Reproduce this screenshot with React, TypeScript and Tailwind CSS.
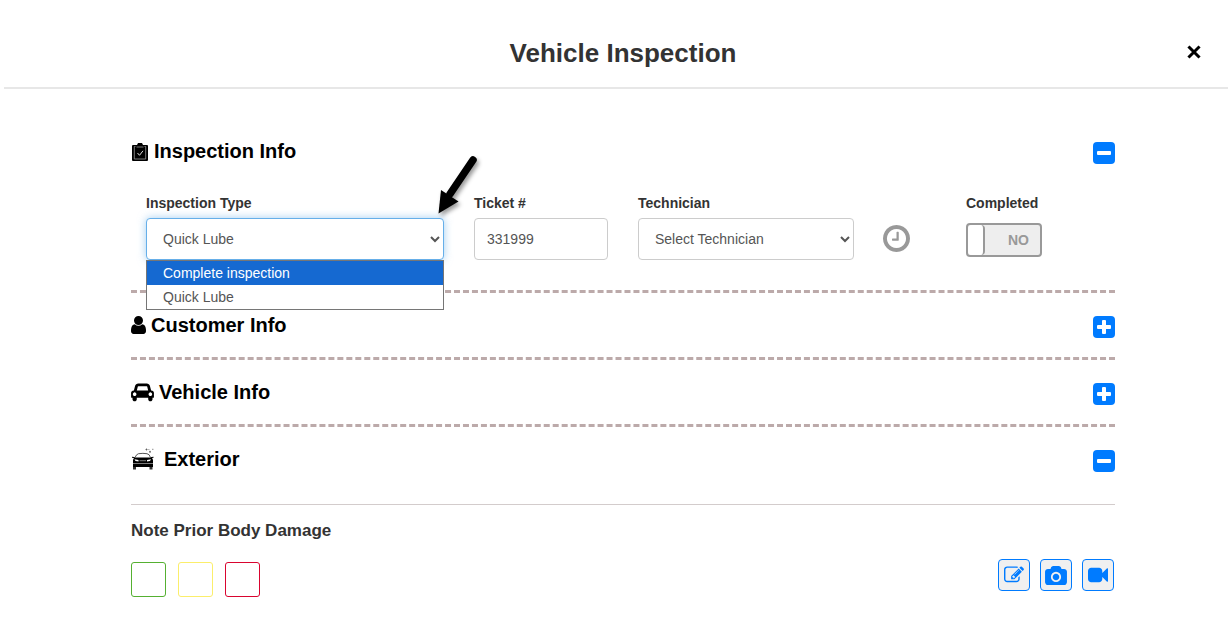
import React, { useState } from "react";

interface SectionHeaderProps {
    title: string;
    icon: React.ReactNode;
    open: boolean;
    onToggle: () => void;
}

const damageLevels = [
    { name: "Minor damage", style: "border-[#55b031]" },
    { name: "Moderate damage", style: "border-[#fbee6b]" },
    { name: "Severe damage", style: "border-[#d9042f]" },
];

const inspectionTypes = ["Complete inspection", "Quick Lube"];

const labelClass = "block h-5 text-sm leading-5 font-bold text-[#333]";
const controlClass = "mt-[5px] block h-[42px] w-full rounded border bg-white px-3 text-sm text-[#555] outline-none";
const actionClass = "flex size-8 items-center justify-center rounded border border-[#007bff] bg-[#f0f0f0] text-[#007bff]";
const dividerClass = "border-b-[3px] border-dashed border-[#bcaaaa]";

function ClipboardIcon() {
    return (
        <svg viewBox="0 -2 18 22" className="h-[22px] w-[18px]" aria-hidden="true">
            <path d="M2 3h4l1-2h4l1 2h4q1 0 1 1v14q0 1-1 1H2q-1 0-1-1V4q0-1 1-1z" fill="#000" />
            <path d="M4.500 4.500H3.300V17H14.700V4.500H13.500M5.500 5h7" fill="none" stroke="#999" strokeWidth=".8" />
            <path d="M6.500 11l2 2.300 3.500-4.500" fill="none" stroke="#ddd" strokeWidth="1" />
        </svg>
    );
}

function UserIcon() {
    return (
        <svg viewBox="256 128 1280 1536" className="h-[18px] w-[15px]" fill="currentColor" aria-hidden="true">
            <path d="M1536 1399q0 109-62.500 187t-150.500 78h-854q-88 0-150.500-78t-62.500-187q0-85 8.500-160.500t31.500-152 58.500-131 94-89 134.500-34.500q131 128 313 128t313-128q76 0 134.500 34.500t94 89 58.500 131 31.500 152 8.500 160.500zm-256-887q0 159-112.500 271.500t-271.500 112.500-271.500-112.500-112.500-271.500 112.500-271.500 271.500-112.500 271.500 112.500 112.500 271.500z" />
        </svg>
    );
}

function CarIcon() {
    return (
        <svg viewBox="0 0 2048 1792" className="h-5 w-[23px]" fill="currentColor" aria-hidden="true">
            <path d="M480 1088q0-66-47-113t-113-47-113 47-47 113 47 113 113 47 113-47 47-113zm36-320h1016l-89-357q-2-8-14-17.500t-21-9.500h-768q-9 0-21 9.500t-14 17.500zm1372 320q0-66-47-113t-113-47-113 47-47 113 47 113 113 47 113-47 47-113zm160-96v384q0 14-9 23t-23 9h-96v128q0 80-56 136t-136 56-136-56-56-136v-128h-1024v128q0 80-56 136t-136 56-136-56-56-136v-128h-96q-14 0-23-9t-9-23v-384q0-93 65.500-158.500t158.500-65.500h28l105-419q23-94 104-157.500t179-63.500h768q98 0 179 63.500t104 157.500l105 419h28q93 0 158.500 65.500t65.500 158.500z" />
        </svg>
    );
}

function ShinyCarIcon() {
    return (
        <svg viewBox="0 -3 28 28" className="size-7" aria-hidden="true">
            <path d="M4 9.500Q5.500 6 7.500 5.700Q12 5 16 5.700Q18.500 6 19.500 9.500" fill="none" stroke="#444" strokeWidth=".9" />
            <path d="M1 8.800l2 .2 1 .5h15.500l1-.5 2-.2v1l-1.500.2q1 1 1 2.500v6.500H2v-6.500q0-1.500 1-2.500L1 9.800z" fill="#000" />
            <path d="M3.500 11.200l4 .8v1.400l-3-.3zM20 11.200l-4 .8v1.400l3-.3z" fill="#fff" />
            <path d="M8.500 12.700h6.500M2 15.500h20" stroke="#999" strokeWidth=".8" />
            <path d="M2 19h3v2.500H2zM18.500 19h3v2.500h-3z" fill="#333" />
            <path d="M14.500 1.500h2M15.500.5v2M18 3.800h2M19 2.800v2M21.200 1.300h1.200M17.500 1.500h.8" stroke="#555" strokeWidth=".8" />
        </svg>
    );
}

function SectionHeader({ title, icon, open, onToggle }: SectionHeaderProps) {
    return (
        <div className="flex h-16 items-center justify-between">
            <h2 className="flex items-center gap-[5px] text-xl leading-6 font-bold text-black">
                {icon}
                <span>{title}</span>
            </h2>
            <button
                type="button"
                aria-label={`Toggle ${title}`}
                aria-expanded={open}
                onClick={onToggle}
                className="mt-1"
            >
                <svg viewBox="0 0 22 22" className="size-[22px]" aria-hidden="true">
                    <rect width="22" height="22" rx="4" fill="#007bff" />
                    <rect x="4" y="9" width="14" height="4" rx="1" fill="#fff" />
                    {!open && <rect x="9" y="4" width="4" height="14" rx="1" fill="#fff" />}
                </svg>
            </button>
        </div>
    );
}

export default function App() {
    const [openSections, setOpenSections] = useState({ inspection: true, customer: false, vehicle: false, exterior: true });
    const [inspectionType, setInspectionType] = useState("Quick Lube");
    const [menuOpen, setMenuOpen] = useState(true);
    const [ticket, setTicket] = useState("331999");
    const [completed, setCompleted] = useState(false);

    const toggle = (key: keyof typeof openSections) => {
        setOpenSections(prev => ({ ...prev, [key]: !prev[key] }));
    };

    const pickType = (type: string) => {
        setInspectionType(type);
        setMenuOpen(false);
    };

    return (
        <div className="min-h-screen bg-white font-['Liberation_Sans',Arial,sans-serif]">
            <header className="ml-1 flex items-center border-b-2 border-[#e7e7e7] pt-9 pr-[26px] pb-[17px] pl-14">
                <h1 className="flex-1 text-center text-[26px] leading-[34px] font-bold text-[#333]">Vehicle Inspection</h1>
                <button type="button" aria-label="Close" className="pb-0.5 text-black">
                    <svg viewBox="0 0 16 16" className="size-4" aria-hidden="true">
                        <path d="M3.500 3.500l9 9M12.500 3.500l-9 9" stroke="currentColor" strokeWidth="3" strokeLinecap="square" />
                    </svg>
                </button>
            </header>

            <main className="pt-[30px] pr-[113px] pb-10 pl-[131px]">
                <section className={dividerClass}>
                    <SectionHeader title="Inspection Info" icon={<ClipboardIcon />} open={openSections.inspection} onToggle={() => toggle("inspection")} />
                    {openSections.inspection && (
                        <div className="grid grid-cols-12 pt-[10px] pb-[30px]">
                            <div className="relative col-span-4 px-[15px]">
                                <label htmlFor="inspection-type" className={labelClass}>Inspection Type</label>
                                <select
                                    id="inspection-type"
                                    value={inspectionType}
                                    onChange={(e) => pickType(e.target.value)}
                                    className={`${controlClass} border-[#66afe9] shadow-[0_0_8px_rgba(102,175,233,0.6)]`}
                                >
                                    {inspectionTypes.map((type) => (
                                        <option key={type}>{type}</option>
                                    ))}
                                </select>
                                {menuOpen && (
                                    <ul role="listbox" aria-label="Inspection Type" className="absolute inset-x-[15px] top-full z-10 border border-[#767676] bg-white text-sm leading-6 text-[#555]">
                                        {inspectionTypes.map((type) => (
                                            <li
                                                key={type}
                                                role="option"
                                                aria-selected={type === inspectionType}
                                                onClick={() => pickType(type)}
                                                className="px-4 first:bg-[#1569d1] first:text-white"
                                            >
                                                {type}
                                            </li>
                                        ))}
                                    </ul>
                                )}
                                <svg viewBox="0 0 48 66" className="pointer-events-none absolute -right-5 bottom-11 h-[66px] w-12 drop-shadow-[2px_3px_2px_rgba(0,0,0,0.4)]" aria-hidden="true">
                                    <path d="M42 10L19 44" stroke="#000" strokeWidth="7.500" strokeLinecap="round" />
                                    <path d="M7.500 63.500L10 40L27.500 51.500z" fill="#000" />
                                </svg>
                            </div>
                            <div className="col-span-2 px-[15px]">
                                <label htmlFor="ticket" className={labelClass}>Ticket #</label>
                                <input
                                    id="ticket"
                                    type="text"
                                    value={ticket}
                                    onChange={(e) => setTicket(e.target.value)}
                                    className={`${controlClass} border-[#ccc]`}
                                />
                            </div>
                            <div className="col-span-3 px-[15px]">
                                <label htmlFor="technician" className={labelClass}>Technician</label>
                                <select id="technician" className={`${controlClass} border-[#ccc]`}>
                                    <option>Select Technician</option>
                                </select>
                            </div>
                            <div className="flex items-end px-[14px] pb-2">
                                <button type="button" aria-label="Time clock" className="text-[#999]">
                                    <svg viewBox="128 128 1536 1536" className="size-[27px]" fill="currentColor" aria-hidden="true">
                                        <path d="M1024 544v448q0 14-9 23t-23 9h-320q-14 0-23-9t-9-23v-64q0-14 9-23t23-9h224v-352q0-14 9-23t23-9h64q14 0 23 9t9 23zm416 352q0-148-73-273t-198-198-273-73-273 73-198 198-73 273 73 273 198 198 273 73 273-73 198-198 73-273zm224 0q0 209-103 385.500t-279.500 279.500-385.500 103-385.500-103-279.500-279.500-103-385.500 103-385.500 279.500-279.500 385.500-103 385.500 103 279.500 279.500 103 385.500z" />
                                    </svg>
                                </button>
                            </div>
                            <div className="col-span-2 px-[15px]">
                                <label htmlFor="completed" className={labelClass}>Completed</label>
                                <label htmlFor="completed" className="relative mt-[10px] flex h-[34px] w-[76px] overflow-hidden rounded border-2 border-[#999] bg-[#eee] text-sm font-bold text-[#999] has-checked:flex-row-reverse">
                                    <input
                                        id="completed"
                                        type="checkbox"
                                        checked={completed}
                                        onChange={(e) => setCompleted(e.target.checked)}
                                        className="absolute size-full opacity-0"
                                    />
                                    <span className="w-[17px] rounded border-r-2 border-[#999] bg-white" />
                                    <span className="flex flex-1 items-center justify-center pl-3">{completed ? "YES" : "NO"}</span>
                                </label>
                            </div>
                        </div>
                    )}
                </section>

                <section className={dividerClass}>
                    <SectionHeader title="Customer Info" icon={<UserIcon />} open={openSections.customer} onToggle={() => toggle("customer")} />
                </section>

                <section className={dividerClass}>
                    <SectionHeader title="Vehicle Info" icon={<CarIcon />} open={openSections.vehicle} onToggle={() => toggle("vehicle")} />
                </section>

                <section>
                    <SectionHeader title="Exterior" icon={<ShinyCarIcon />} open={openSections.exterior} onToggle={() => toggle("exterior")} />
                    {openSections.exterior && (
                        <div className="mt-[13px] border-t border-[#d3cccc] pt-4">
                            <h3 className="text-[17px] leading-5 font-bold text-[#333]">Note Prior Body Damage</h3>
                            <div className="mt-[18px] flex items-start justify-between">
                                <div className="flex gap-3 pt-[3px]">
                                    {damageLevels.map((level) => (
                                        <button key={level.name} type="button" aria-label={level.name} className={`size-[35px] rounded-[3px] border bg-white ${level.style}`} />
                                    ))}
                                </div>
                                <div className="flex gap-[10px] pr-px">
                                    <button type="button" aria-label="Add note" className={actionClass}>
                                        <svg viewBox="0 0 1792 1792" className="size-5" fill="currentColor" aria-hidden="true">
                                            <path d="M888 1184l116-116-152-152-116 116v56h96v96h56zm440-720q-16-16-33 1l-350 350q-17 17-1 33t33-1l350-350q17-17 1-33zm80 594v190q0 119-84.500 203.500t-203.500 84.500h-832q-119 0-203.500-84.500t-84.500-203.500v-832q0-119 84.500-203.500t203.500-84.500h832q63 0 117 25 15 7 18 23 3 17-9 29l-49 49q-14 14-32 8-23-6-45-6h-832q-66 0-113 47t-47 113v832q0 66 47 113t113 47h832q66 0 113-47t47-113v-126q0-13 9-22l64-64q15-15 35-7t20 29zm-96-738l288 288-672 672h-288v-288zm444 132l-92 92-288-288 92-92q28-28 68-28t68 28l152 152q28 28 28 68t-28 68z" />
                                        </svg>
                                    </button>
                                    <button type="button" aria-label="Take photo" className={actionClass}>
                                        <svg viewBox="0 0 1920 1664" className="h-[19px] w-[22px]" fill="currentColor" aria-hidden="true">
                                            <path d="M960 672q119 0 203.500 84.500t84.500 203.500-84.500 203.500-203.500 84.500-203.500-84.500-84.500-203.500 84.500-203.500 203.500-84.500zm704-416q106 0 181 75t75 181v896q0 106-75 181t-181 75h-1408q-106 0-181-75t-75-181v-896q0-106 75-181t181-75h224l51-136q19-49 69.500-84.500t103.500-35.500h512q53 0 103.500 35.500t69.500 84.500l51 136h224zm-704 1152q185 0 316.500-131.500t131.500-316.500-131.500-316.500-316.500-131.500-316.500 131.500-131.500 316.500 131.500 316.500 316.500 131.500z" />
                                        </svg>
                                    </button>
                                    <button type="button" aria-label="Record video" className={actionClass}>
                                        <svg viewBox="0 0 1792 1792" className="size-5" fill="currentColor" aria-hidden="true">
                                            <path d="M1792 352v1088q0 42-39 59-13 5-25 5-27 0-45-19l-403-403v166q0 119-84.500 203.500t-203.500 84.500h-704q-119 0-203.500-84.500t-84.500-203.500v-704q0-119 84.500-203.500t203.500-84.500h704q119 0 203.500 84.500t84.500 203.500v165l403-402q18-19 45-19 12 0 25 5 39 17 39 59z" />
                                        </svg>
                                    </button>
                                </div>
                            </div>
                        </div>
                    )}
                </section>
            </main>
        </div>
    );
}
